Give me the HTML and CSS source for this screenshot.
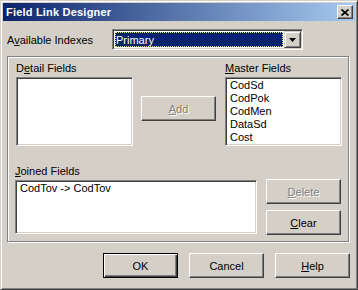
FILE: index.html
```html
<!DOCTYPE html>
<html lang="en">
<head>
    <meta charset="UTF-8">
    <title>Field Link Designer</title>
    <link rel="stylesheet" href="styles.css">
</head>
<body>
    <div class="window">
        <!-- Caption bar -->
        <div class="titlebar">
            <span class="title">Field Link Designer</span>
            <button class="close-btn" aria-label="Close">
                <svg width="8" height="7" viewBox="0 0 8 7">
                    <path d="M0.5 0.5 L7.5 6.5 M7.5 0.5 L0.5 6.5" stroke="#000" stroke-width="1.7" fill="none"/>
                </svg>
            </button>
        </div>

        <div class="content">
            <div class="index-row">
                <span class="index-label">A<u>v</u>ailable Indexes</span>
                <div class="combo">
                    <div class="combo-field">
                        <span class="combo-value">Primary</span>
                    </div>
                    <div class="combo-arrow">
                        <svg width="7" height="4" viewBox="0 0 7 4">
                            <polygon points="0,0 7,0 3.5,4" fill="#000"/>
                        </svg>
                    </div>
                </div>
            </div>

            <!-- Fields group -->
            <div class="group">
                <div class="fields-row">
                    <div class="field-column">
                        <div class="caption">D<u>e</u>tail Fields</div>
                        <ul class="listbox field-list"></ul>
                    </div>
                    <button class="btn add-btn" disabled><u>A</u>dd</button>
                    <div class="field-column">
                        <div class="caption"><u>M</u>aster Fields</div>
                        <ul class="listbox field-list">
                            <li>CodSd</li>
                            <li>CodPok</li>
                            <li>CodMen</li>
                            <li>DataSd</li>
                            <li>Cost</li>
                        </ul>
                    </div>
                </div>

                <div class="joined-row">
                    <div class="field-column">
                        <div class="caption"><u>J</u>oined Fields</div>
                        <ul class="listbox joined-list">
                            <li>CodTov -&gt; CodTov</li>
                        </ul>
                    </div>
                    <div class="side-buttons">
                        <button class="btn" disabled><u>D</u>elete</button>
                        <button class="btn"><u>C</u>lear</button>
                    </div>
                </div>
            </div>

            <div class="dialog-buttons">
                <button class="btn btn-default">OK</button>
                <button class="btn">Cancel</button>
                <button class="btn"><u>H</u>elp</button>
            </div>
        </div>
    </div>
</body>
</html>
```

FILE: styles.css
```css
body {
    margin: 0;
    font-family: "Liberation Sans", Arial, sans-serif;
    font-size: 11px;
    color: #000;
    background-color: #d4d0c8;
}
.window {
    width: 358px;
    height: 290px;
    box-sizing: border-box;
    padding: 2px;
    background-color: #d4d0c8;
    border: 1px solid;
    border-color: #d4d0c8 #404040 #404040 #d4d0c8;
    box-shadow: inset 1px 1px #fff, inset -1px -1px #808080;
}
.titlebar {
    height: 18px;
    display: flex;
    align-items: center;
    justify-content: space-between;
    padding: 0 2px 0 3px;
    background: linear-gradient(to right, #0a246a, #a6caf0);
}
.title {
    color: #fff;
    font-weight: bold;
    font-size: 11px;
    letter-spacing: 0.2px;
}
.close-btn {
    width: 16px;
    height: 14px;
    padding: 0;
    display: flex;
    align-items: center;
    justify-content: center;
    background-color: #d4d0c8;
    border: 1px solid;
    border-color: #fff #404040 #404040 #fff;
    box-shadow: inset -1px -1px #808080;
}
.content {
    display: flex;
    flex-direction: column;
    padding: 8px 5px 0 4px;
}
.index-row {
    display: flex;
    align-items: center;
    height: 21px;
}
.index-label {
    width: 105px;
}
.combo {
    width: 191px;
    height: 21px;
    box-sizing: border-box;
    display: flex;
    padding: 1px;
    background-color: #fff;
    border: 1px solid;
    border-color: #808080 #fff #fff #808080;
    box-shadow: inset 1px 1px #404040, inset -1px -1px #d4d0c8;
}
.combo-field {
    flex: 1;
    display: flex;
    padding: 1px;
}
.combo-value {
    flex: 1;
    display: flex;
    align-items: center;
    padding-left: 1px;
    color: #fff;
    background-color: #0a246a;
    outline: 1px dotted #e6dc9a;
    outline-offset: -1px;
}
.combo-arrow {
    width: 17px;
    height: 17px;
    box-sizing: border-box;
    display: flex;
    align-items: center;
    justify-content: center;
    background-color: #d4d0c8;
    border: 1px solid;
    border-color: #d4d0c8 #404040 #404040 #d4d0c8;
    box-shadow: inset 1px 1px #fff, inset -1px -1px #808080;
}
.group {
    width: 342px;
    height: 186px;
    box-sizing: border-box;
    margin-top: 6px;
    padding: 5px 0 0 8px;
    border: 1px solid #808080;
    box-shadow: inset 1px 1px #fff, 1px 1px #fff;
}
.fields-row {
    display: flex;
}
.field-column {
    display: flex;
    flex-direction: column;
}
.caption {
    height: 13px;
    line-height: 13px;
    margin-bottom: 2px;
}
.listbox {
    list-style: none;
    margin: 0;
    box-sizing: border-box;
    padding: 1px 4px 0 4px;
    background-color: #fff;
    border: 1px solid;
    border-color: #808080 #fff #fff #808080;
    box-shadow: inset 1px 1px #404040, inset -1px -1px #d4d0c8;
}
.listbox li {
    height: 13px;
    line-height: 13px;
}
.field-list {
    width: 117px;
    height: 69px;
}
.joined-list {
    width: 242px;
    height: 54px;
}
.btn {
    width: 75px;
    height: 25px;
    padding: 0;
    font-family: "Liberation Sans", Arial, sans-serif;
    font-size: 11px;
    color: #000;
    background-color: #d4d0c8;
    border: 1px solid;
    border-color: #fff #404040 #404040 #fff;
    box-shadow: inset -1px -1px #808080;
}
.btn:disabled {
    color: #808080;
    text-shadow: 1px 1px 0 #fff;
}
.btn-default {
    border-color: #000;
    box-shadow: inset 1px 1px #fff, inset -1px -1px #404040, inset -2px -2px #808080;
}
.add-btn {
    margin: 34px 9px 0 8px;
}
.joined-row {
    display: flex;
    margin: 19px 0 0 -1px;
}
.side-buttons {
    display: flex;
    flex-direction: column;
    gap: 6px;
    margin: 14px 0 0 9px;
}
.dialog-buttons {
    display: flex;
    justify-content: flex-end;
    gap: 11px;
    margin-top: 11px;
}
```
